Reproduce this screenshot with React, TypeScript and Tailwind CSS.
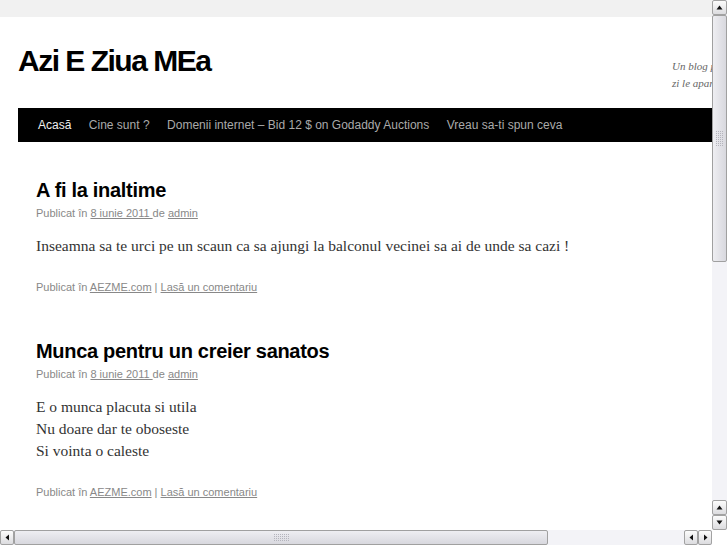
import React from "react";

const sans = { fontFamily: '"Liberation Sans", Arial, sans-serif' };
const serif = { fontFamily: '"Liberation Serif", "Times New Roman", serif' };

function Arrow({ dir }: { dir: "up" | "down" | "left" | "right" }) {
  const pts =
    dir === "up"
      ? "3.5,1.5 6.5,5.5 0.5,5.5"
      : dir === "down"
      ? "0.5,1.5 6.5,1.5 3.5,5.5"
      : dir === "left"
      ? "5,0.5 5,6.5 1.5,3.5"
      : "2,0.5 2,6.5 5.5,3.5";
  return (
    <svg width="7" height="7" viewBox="0 0 7 7">
      <polygon points={pts} fill="#111" />
    </svg>
  );
}

function Btn({ dir, w }: { dir: "up" | "down" | "left" | "right"; w: string }) {
  return (
    <div
      className={`${w} h-[15px] shrink-0 box-border border border-[#a2a2a2] rounded-[2px] bg-linear-to-b from-[#fcfcfc] to-[#dcdcdf] flex items-center justify-center`}
    >
      <Arrow dir={dir} />
    </div>
  );
}

function Gripper({ cols, rows }: { cols: number; rows: number }) {
  const dots: React.ReactNode[] = [];
  for (let r = 0; r < rows; r++)
    for (let c = 0; c < cols; c++)
      dots.push(<rect key={`${r}-${c}`} x={c * 2} y={r * 2} width="1" height="1" fill="#b4b4bc" />);
  return (
    <svg width={cols * 2 - 1} height={rows * 2 - 1} viewBox={`0 0 ${cols * 2 - 1} ${rows * 2 - 1}`}>
      {dots}
    </svg>
  );
}

function VScroll() {
  return (
    <div className="w-[15px] h-full flex flex-col bg-[#f1f1f5]">
      <Btn dir="up" w="w-[15px]" />
      <div className="h-[247px] box-border border border-[#a0a0a0] rounded-[2px] bg-linear-to-r from-[#eeeef2] to-[#d8d8de] flex items-center justify-center">
        <Gripper cols={4} rows={8} />
      </div>
      <div className="flex-1 bg-[#f3f3f7]" />
      <Btn dir="up" w="w-[15px]" />
      <Btn dir="down" w="w-[15px]" />
    </div>
  );
}

function HScroll() {
  return (
    <div className="flex-1 h-[15px] flex bg-[#f1f1f5]">
      <Btn dir="left" w="w-[14px]" />
      <div className="w-[534px] h-[15px] box-border border border-[#a0a0a0] rounded-[2px] bg-linear-to-b from-[#eeeef2] to-[#d8d8de] flex items-center justify-center">
        <Gripper cols={8} rows={4} />
      </div>
      <div className="flex-1 bg-[#f3f3f7]" />
      <Btn dir="left" w="w-[14px]" />
      <Btn dir="right" w="w-[14px]" />
    </div>
  );
}

function Meta({ children, className = "" }: { children: React.ReactNode; className?: string }) {
  return (
    <div className={`text-[11px] leading-[18px] text-[#888] ${className}`} style={sans}>
      {children}
    </div>
  );
}

function Post({
  title,
  lines,
  className = "",
}: {
  title: string;
  lines: string[];
  className?: string;
}) {
  return (
    <div className={className}>
      <h2 className="text-[20px] leading-[26px] font-bold tracking-[-0.3px] text-black" style={sans}>
        {title}
      </h2>
      <Meta className="mt-[1px]">
        Publicat în <span className="underline">8 iunie 2011 </span>de <span className="underline">admin</span>
      </Meta>
      <div className="mt-[13px] text-[15.5px] leading-[22px] text-[#333]" style={serif}>
        {lines.map((l, i) => (
          <div key={i}>{l}</div>
        ))}
      </div>
      <Meta className="mt-[21px]">
        Publicat în <span className="underline">AEZME.com</span> | <span className="underline">Lasă un comentariu</span>
      </Meta>
    </div>
  );
}

export default function App() {
  return (
    <div className="w-[727px] h-[545px] flex flex-col overflow-hidden bg-white">
      <div className="flex flex-1 min-h-0">
        <div className="flex-1 min-w-0 overflow-hidden bg-[#f1f1f1]">
          <div className="w-[960px] h-[700px] mt-[17px] bg-white">
            <div className="h-[91px] flex items-start pl-[18px] pt-[26px]">
              <div
                className="w-[654px] h-[36px] leading-[36px] text-[30px] font-bold tracking-[-1.5px] text-black"
                style={sans}
              >
                Azi E Ziua MEa
              </div>
              <div className="mt-[15px] text-[11px] leading-[17px] italic text-[#666]" style={serif}>
                <div>Un blog pentru fiecare</div>
                <div>zi le aparent obisnuite</div>
              </div>
            </div>
            <div
              className="ml-[18px] w-[942px] h-[34px] bg-black flex items-center pl-[20px] gap-[17.5px] text-[12px] text-[#aaa]"
              style={sans}
            >
              <span className="text-[#eee]">Acasă</span>
              <span>Cine sunt ?</span>
              <span>Domenii internet – Bid 12 $ on Godaddy Auctions</span>
              <span>Vreau sa-ti spun ceva</span>
            </div>
            <div className="pl-[36px] pt-[35px]">
              <Post
                title="A fi la inaltime"
                lines={["Inseamna sa te urci pe un scaun ca sa ajungi la balconul vecinei sa ai de unde sa cazi !"]}
              />
              <Post
                className="mt-[42px]"
                title="Munca pentru un creier sanatos"
                lines={["E o munca placuta si utila", "Nu doare dar te oboseste", "Si vointa o caleste"]}
              />
            </div>
          </div>
        </div>
        <VScroll />
      </div>
      <div className="flex h-[15px]">
        <HScroll />
        <div className="w-[15px] bg-white" />
      </div>
    </div>
  );
}
